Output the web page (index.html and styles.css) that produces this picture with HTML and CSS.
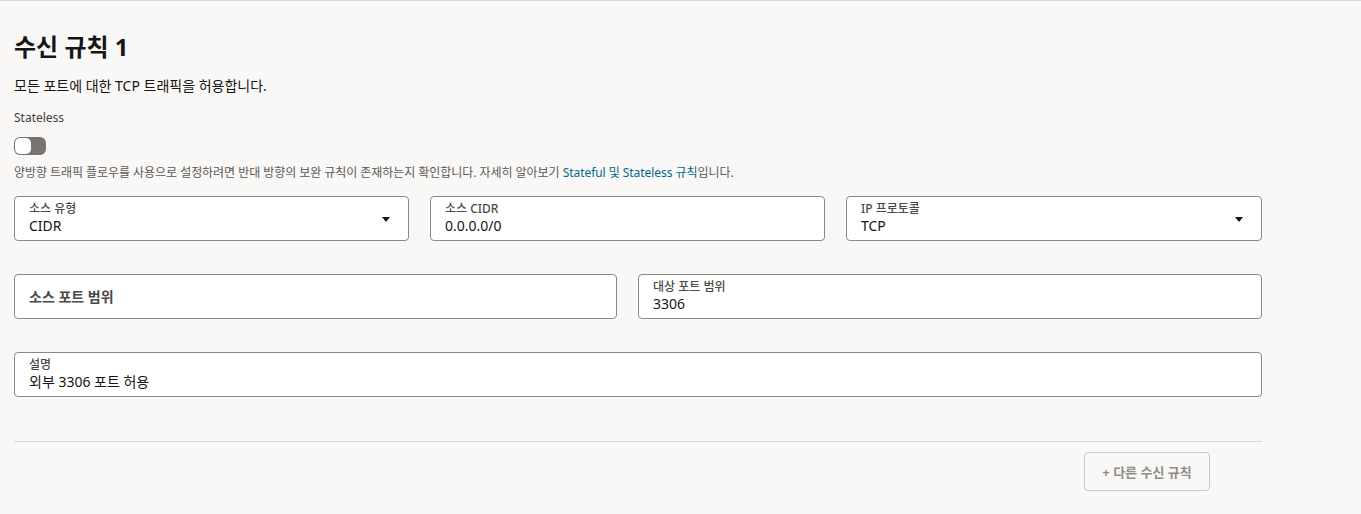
FILE: index.html
```html
<!DOCTYPE html>
<html lang="ko">
<head>
<meta charset="utf-8">
<link rel="stylesheet" href="styles.css">
</head>
<body>
<div class="page">
  <h1 class="title">수신 규칙 1</h1>
  <p class="subtitle">모든 포트에 대한 TCP 트래픽을 허용합니다.</p>
  <div class="stateless-label">Stateless</div>
  <div class="toggle"><span class="knob"></span></div>
  <p class="help">양방향 트래픽 플로우를 사용으로 설정하려면 반대 방향의 보완 규칙이 존재하는지 확인합니다. 자세히 알아보기 <a class="link">Stateful 및 Stateless 규칙</a>입니다.</p>

  <div class="row row3">
    <div class="field select">
      <div class="field-text">
        <div class="label">소스 유형</div>
        <div class="value">CIDR</div>
      </div>
      <span class="caret"></span>
    </div>
    <div class="field">
      <div class="field-text">
        <div class="label">소스 CIDR</div>
        <div class="value">0.0.0.0/0</div>
      </div>
    </div>
    <div class="field select">
      <div class="field-text">
        <div class="label">IP 프로토콜</div>
        <div class="value">TCP</div>
      </div>
      <span class="caret"></span>
    </div>
  </div>

  <div class="row row2">
    <div class="field empty">
      <div class="label big">소스 포트 범위</div>
    </div>
    <div class="field">
      <div class="field-text">
        <div class="label">대상 포트 범위</div>
        <div class="value">3306</div>
      </div>
    </div>
  </div>

  <div class="row row1">
    <div class="field">
      <div class="field-text">
        <div class="label">설명</div>
        <div class="value">외부 3306 포트 허용</div>
      </div>
    </div>
  </div>

  <hr class="sep">
  <div class="actions">
    <button class="add-btn">+ 다른 수신 규칙</button>
  </div>
</div>
</body>
</html>
```

FILE: styles.css
```css
html, body {
  margin: 0;
  padding: 0;
}
body {
  background: #f9f8f6;
  font-family: "Noto Sans", "Noto Sans CJK KR", sans-serif;
  color: #161513;
  border-top: 1px solid #d9d7d4;
  height: 513px;
  overflow: hidden;
}
.page {
  width: 1248px;
  padding: 0 0 0 14px;
}
.title {
  margin: 29px 0 0 0;
  font-size: 24px;
  line-height: 34px;
  font-weight: 700;
  letter-spacing: 0;
}
.subtitle {
  margin: 12px 0 0 0;
  font-size: 14px;
  line-height: 20px;
}
.stateless-label {
  margin-top: 14px;
  font-size: 12px;
  line-height: 16px;
  color: #3f3d3a;
}
.toggle {
  margin-top: 11px;
  width: 32px;
  height: 18px;
  border-radius: 6px;
  background: #7a736e;
  position: relative;
}
.knob {
  position: absolute;
  left: 1px;
  top: 1px;
  width: 16px;
  height: 16px;
  border-radius: 5px;
  background: #ffffff;
}
.help {
  margin: 10px 0 0 0;
  font-size: 12px;
  line-height: 16px;
  color: #5b5955;
  letter-spacing: -0.05px;
}
.link {
  color: #00688c;
}
.row {
  display: grid;
  gap: 21px;
}
.row3 {
  margin-top: 15px;
  grid-template-columns: 395px 395px 1fr;
}
.row2 {
  margin-top: 33px;
  grid-template-columns: 603px 1fr;
}
.row1 {
  margin-top: 33px;
  grid-template-columns: 1fr;
}
.field {
  box-sizing: border-box;
  height: 45px;
  background: #ffffff;
  border: 1px solid #8b8985;
  border-radius: 4px;
  padding: 5px 14px 0 14px;
  display: flex;
  align-items: flex-start;
  justify-content: space-between;
}
.field.empty {
  align-items: center;
  padding-top: 0;
}
.label {
  font-size: 12px;
  line-height: 14px;
  font-weight: 500;
  color: #4b4946;
}
.label.big {
  font-size: 14px;
  font-weight: 700;
  color: #4b4946;
}
.value {
  font-size: 14px;
  line-height: 20px;
  color: #161513;
}
.caret {
  width: 0;
  height: 0;
  border-left: 4.5px solid transparent;
  border-right: 4.5px solid transparent;
  border-top: 5px solid #161513;
  margin-top: 15px;
  margin-right: 4px;
}
.sep {
  margin: 44px 0 0 0;
  border: 0;
  border-top: 1px solid #dcdad7;
  height: 0;
}
.actions {
  display: flex;
  justify-content: flex-end;
  padding-right: 52px;
  margin-top: 10px;
}
.add-btn {
  box-sizing: border-box;
  width: 126px;
  height: 39px;
  background: transparent;
  border: 1px solid #c9c7c3;
  border-radius: 4px;
  font-family: "Noto Sans", "Noto Sans CJK KR", sans-serif;
  font-size: 13px;
  font-weight: 700;
  color: #8f8d89;
  padding: 0;
}
```
